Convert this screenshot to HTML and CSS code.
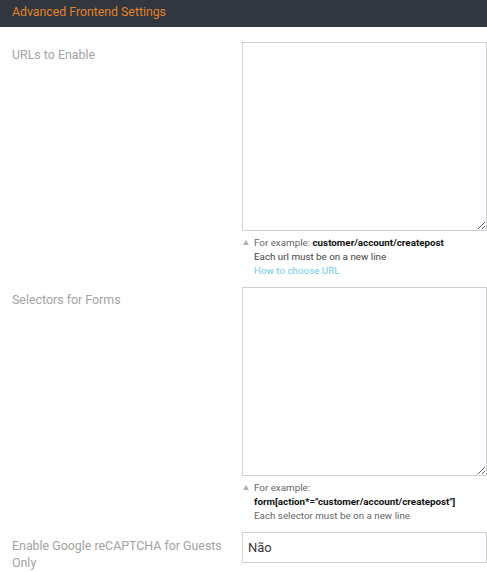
FILE: index.html
```html
<!DOCTYPE html>
<html lang="en">
<head>
    <meta charset="UTF-8">
    <meta name="viewport" content="width=device-width, initial-scale=1.0">
    <title>Advanced Frontend Settings</title>
    <link rel="stylesheet" href="styles.css">
</head>
<body>
    <div class="section-title">Advanced Frontend Settings</div>

    <div class="settings">
        <!-- URLs -->
        <div class="row">
            <label class="row-label" for="urls">URLs to Enable</label>
            <div class="row-value">
                <textarea id="urls" class="field-area"></textarea>
                <div class="note">
                    <span class="note-arrow"></span>
                    <div class="note-text">
                        For example: <strong>customer/account/createpost</strong><br>
                        <span class="dark">Each url must be on a new line</span><br>
                        <a href="#" class="note-link">How to choose URL</a>
                    </div>
                </div>
            </div>
        </div>

        <!-- Selectors -->
        <div class="row">
            <label class="row-label" for="selectors">Selectors for Forms</label>
            <div class="row-value">
                <textarea id="selectors" class="field-area"></textarea>
                <div class="note">
                    <span class="note-arrow"></span>
                    <div class="note-text">
                        For example: <strong>form[action*="customer/account/createpost"]</strong><br>
                        Each selector must be on a new line
                    </div>
                </div>
            </div>
        </div>

        <!-- Guests -->
        <div class="row">
            <label class="row-label row-label-select" for="guests">Enable Google reCAPTCHA for Guests Only</label>
            <div class="row-value">
                <select id="guests" class="field-select">
                    <option>Não</option>
                    <option>Sim</option>
                </select>
            </div>
        </div>
    </div>
</body>
</html>
```

FILE: styles.css
```css
body {
    margin: 0;
    background-color: #fff;
    font-family: Roboto, "Liberation Sans", Arial, sans-serif;
    overflow: hidden;
}

.section-title {
    height: 27px;
    line-height: 24px;
    padding-left: 12px;
    background-color: #31363f;
    color: #e3832a;
    font-size: 12.3px;
}

.settings {
    padding: 15px 0 0 12px;
}

.row {
    display: grid;
    grid-template-columns: 230px 1fr;
    margin-bottom: 9px;
}

.row-label {
    padding: 5px 8px 0 0;
    color: #a3a3a3;
    font-size: 12.4px;
    line-height: 16.5px;
}

.row-label-select {
    padding-top: 6px;
}

.field-area {
    display: block;
    box-sizing: border-box;
    width: 100%;
    height: 189px;
    margin: 0;
    border: 1px solid #d0d0d4;
    background: #fff;
}

.note {
    display: flex;
    margin-top: 5px;
    font-size: 9.8px;
    line-height: 14px;
    color: #666;
}

.note-arrow {
    flex: none;
    width: 0;
    height: 0;
    margin: 4px 5px 0 1px;
    border-left: 3px solid transparent;
    border-right: 3px solid transparent;
    border-bottom: 5px solid #aab0b6;
}

.note-text strong {
    color: #111;
}

.note-text .dark {
    color: #444;
}

.note-link {
    color: #6fcbe6;
    text-decoration: none;
}

.field-select {
    display: block;
    box-sizing: border-box;
    width: 100%;
    height: 31px;
    margin: 0;
    padding: 0 5px;
    border: 1px solid #d0d0d4;
    border-radius: 0;
    background: #fff;
    color: #3a3a3a;
    font-family: Roboto, "Liberation Sans", Arial, sans-serif;
    font-size: 13px;
    appearance: none;
}
```
